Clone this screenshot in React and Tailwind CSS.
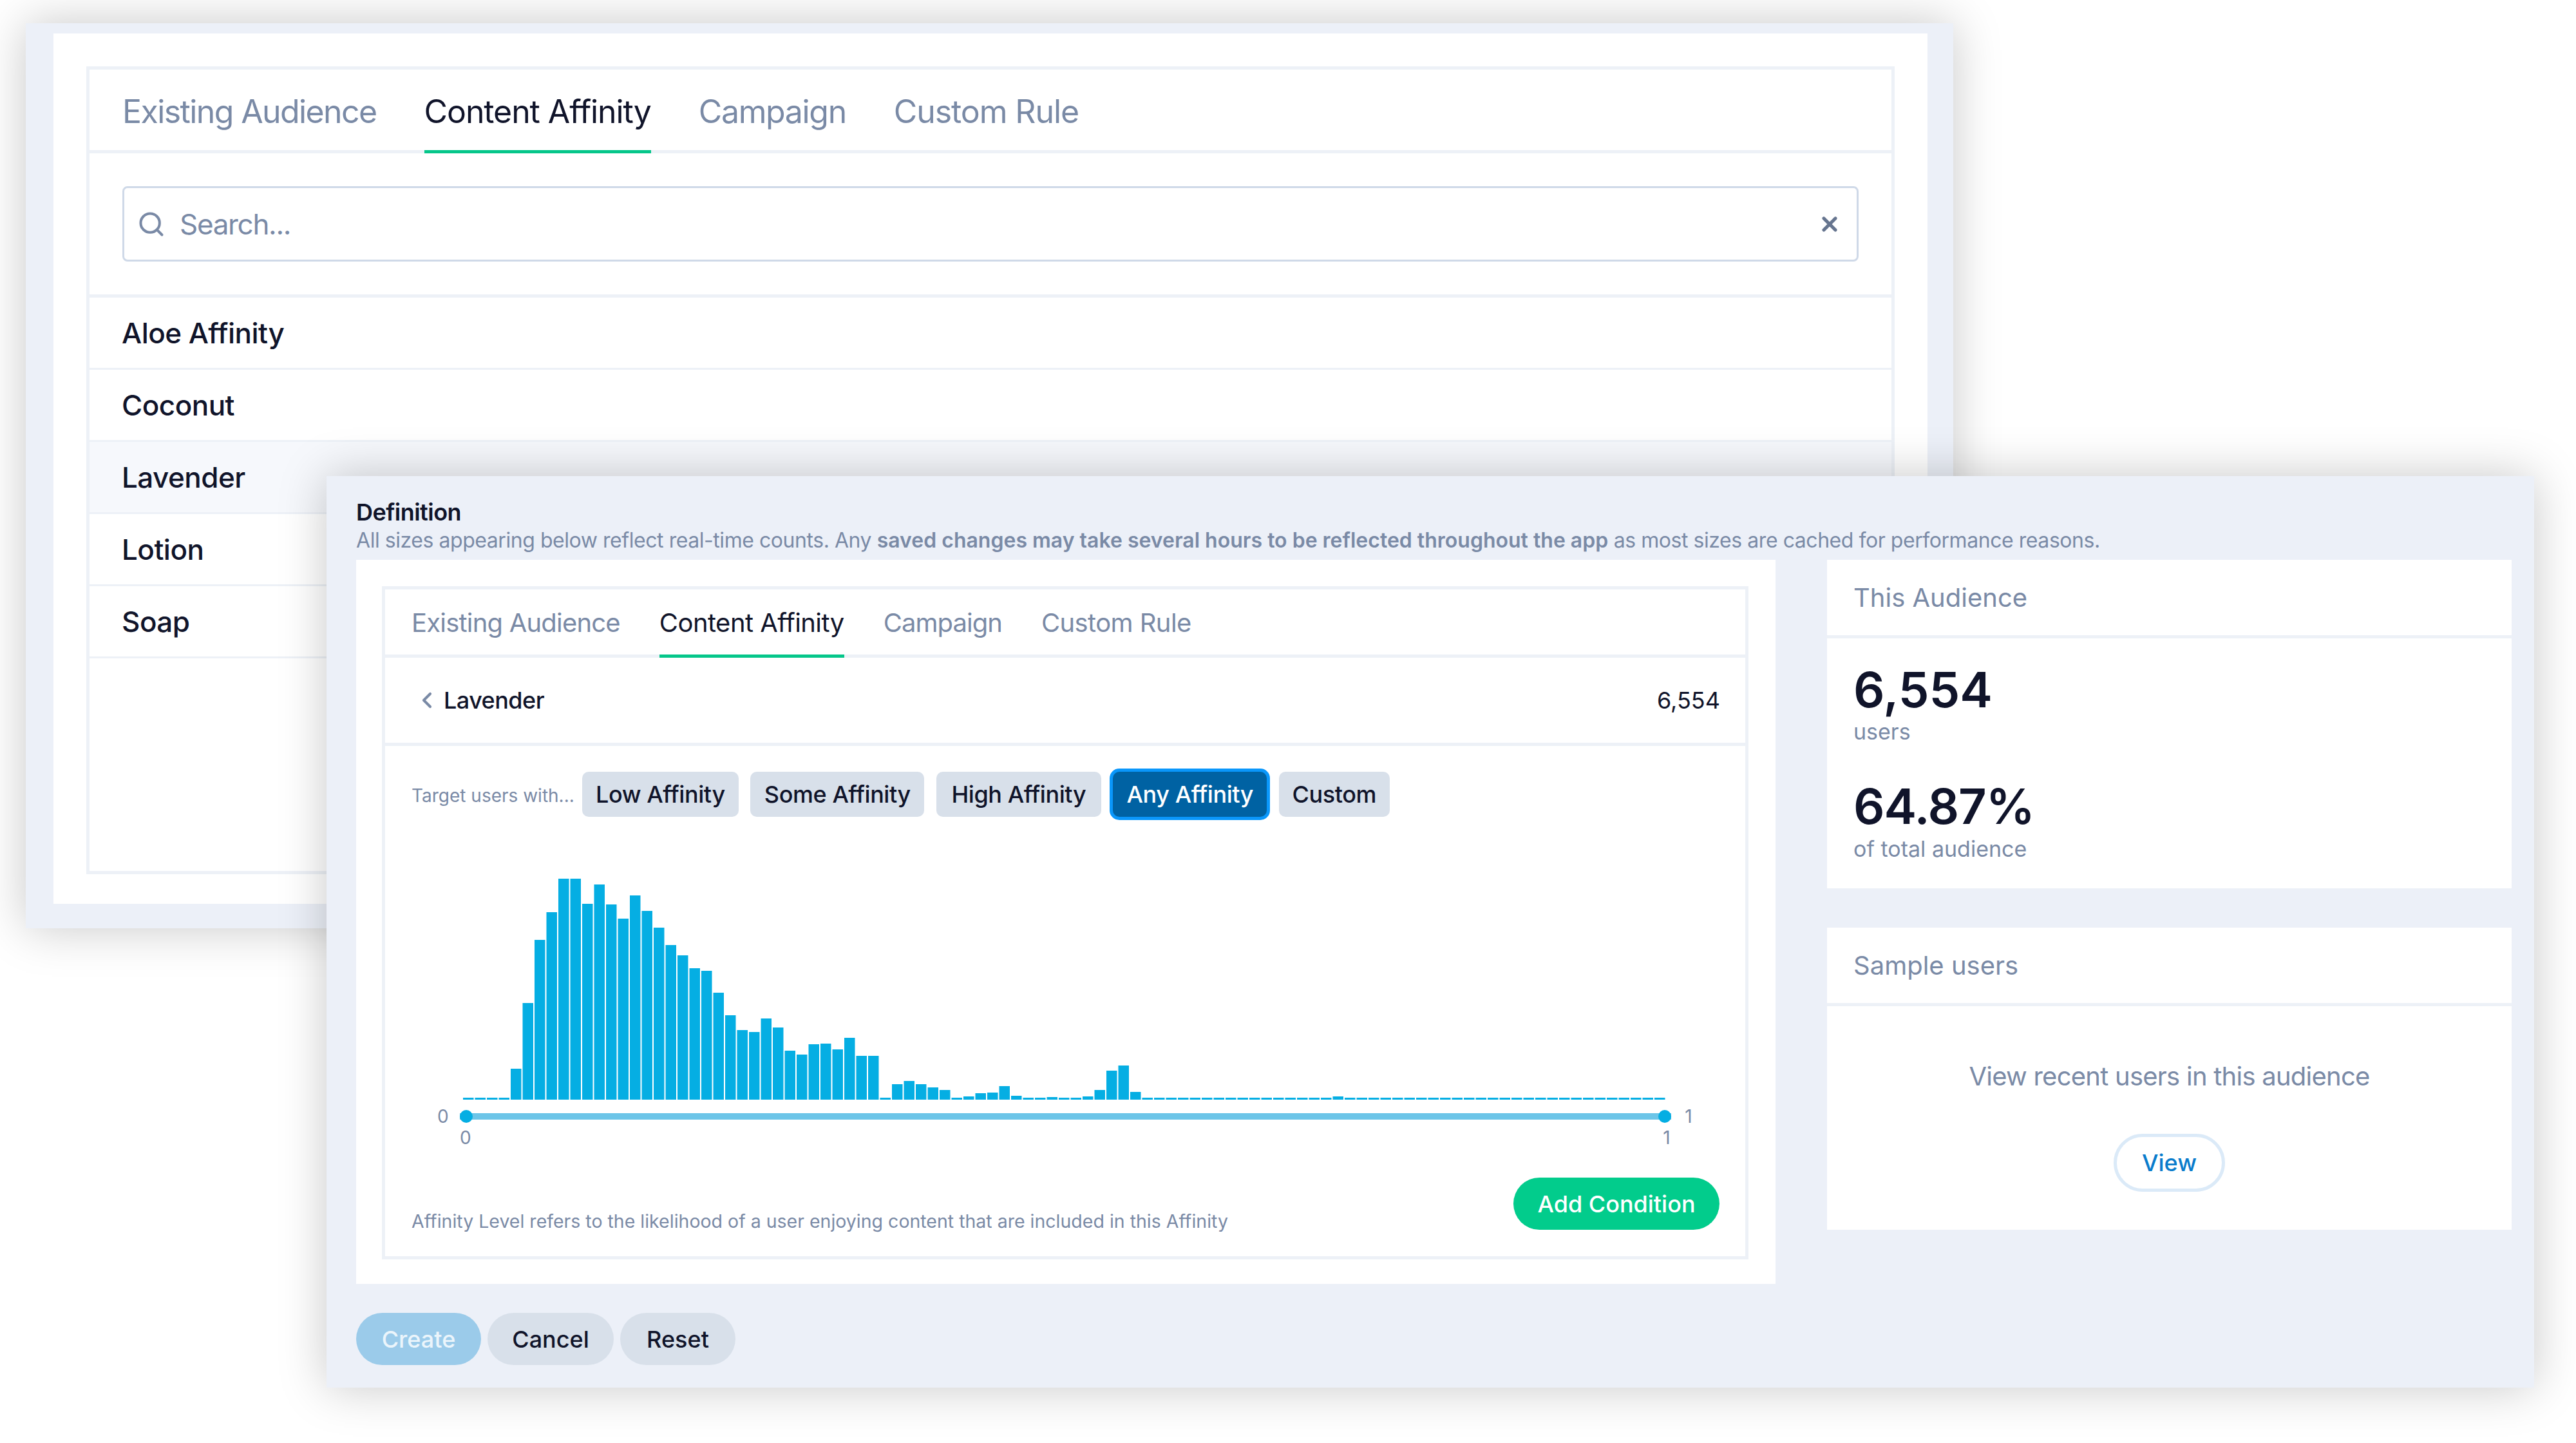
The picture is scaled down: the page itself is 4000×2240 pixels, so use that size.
import { Search, X, ChevronLeft } from 'lucide-react';

const backRows = ['Aloe Affinity', 'Coconut', 'Lavender', 'Lotion', 'Soap'];
const backTabs = [
  { label: 'Existing Audience', tracking: 'tracking-[-0.032em]' },
  { label: 'Content Affinity', tracking: 'tracking-[-0.022em]' },
  { label: 'Campaign', tracking: 'tracking-[-0.027em]' },
  { label: 'Custom Rule', tracking: 'tracking-[-0.022em]' },
];
const frontTabs = [
  { label: 'Existing Audience', tracking: 'tracking-[-0.02em]' },
  { label: 'Content Affinity', tracking: 'tracking-[-0.014em]' },
  { label: 'Campaign', tracking: 'tracking-[-0.024em]' },
  { label: 'Custom Rule', tracking: 'tracking-[-0.015em]' },
];
const affinityOptions = [
  { label: 'Low Affinity', width: 'w-[243px]' },
  { label: 'Some Affinity', width: 'w-[270px]' },
  { label: 'High Affinity', width: 'w-[256px]' },
  { label: 'Any Affinity', width: 'w-[239px]' },
  { label: 'Custom', width: 'w-[172px]' },
];

// bar heights read off the histogram, the tail stays at the thin baseline
const bars = [
  3, 3, 3, 3, 48, 150, 248, 291, 343, 343, 304, 334, 303, 281, 317, 293, 267, 240, 224, 204, 200,
  166, 131, 108, 105, 126, 112, 76, 70, 86, 87, 78, 96, 68, 68, 3, 24, 29, 24, 19, 15, 3, 5, 10, 11,
  21, 6, 3, 3, 4, 3, 3, 5, 15, 45, 53, 12,
  ...Array.from({ length: 44 }, (_, i) => (i === 16 ? 5 : 3)),
];

const Histogram = () => (
  <svg className="ml-[80px] mt-[96px] block" width="1870" height="343" viewBox="0 0 1870 343">
    {bars.map((h, i) => (
      <rect key={i} x={i * 18.5} y={343 - h} width="16.5" height={h} fill="#05aee3" />
    ))}
  </svg>
);

const Card = ({ title, children, className }) => (
  <div className={`flex flex-col bg-white ${className}`}>
    <div className="flex h-[122px] items-center border-b-[5px] border-[#edf1f7] pl-[41px] text-[40px] text-[#7a8aa6]">
      {title}
    </div>
    {children}
  </div>
);

const App = () => {
  return (
    <div className="relative h-[2240px] w-[4000px] overflow-hidden bg-white pl-[40px] pt-[36px] antialiased [font-family:Inter,sans-serif]">
      {/* Back window */}
      <div className="h-[1405px] w-[2993px] bg-[#ecf0f8] pb-[38px] pl-[43px] pr-[40px] pt-[16px] shadow-[0_0_70px_rgba(0,0,0,0.22)]">
        <div className="h-full bg-white px-[51px] pb-[46px] pt-[51px]">
          <div className="flex h-full flex-col border-[5px] border-[#edf1f7]">
            <div className="flex h-[130px] gap-[74px] border-b-[5px] border-[#edf1f7] pl-[51px]">
              {backTabs.map((tab) => (
                <div
                  key={tab.label}
                  className={`-mb-[5px] flex items-center border-b-[5px] pt-[5px] text-[50px] ${tab.tracking} ${
                    tab.label === 'Content Affinity'
                      ? 'border-[#05c68a] text-[#10142a]'
                      : 'border-transparent text-[#7a8aa6]'
                  }`}
                >
                  {tab.label}
                </div>
              ))}
            </div>
            <div className="border-b-[5px] border-[#edf1f7] p-[51px]">
              <div className="flex h-[117px] items-center rounded-[8px] border-[3px] border-[#cfd9e8] pl-[20px] pr-[24px]">
                <Search size={44} strokeWidth={2.2} color="#7a8aa6" />
                <span className="ml-[22px] flex-1 text-[44px] tracking-[-0.03em] text-[#7a8aa6]">Search...</span>
                <X size={36} strokeWidth={3.5} color="#66758f" />
              </div>
            </div>
            {backRows.map((row) => (
              <div
                key={row}
                className={`flex h-[112px] items-center border-b-[3px] border-[#edf1f7] pl-[50px] text-[44px] font-medium tracking-[-0.012em] text-[#10142a] ${
                  row === 'Lavender' ? 'bg-[#f6f8fc]' : ''
                }`}
              >
                {row}
              </div>
            ))}
          </div>
        </div>
      </div>

      {/* Front window */}
      <div className="absolute left-[507px] top-[739px] h-[1415px] w-[3428px] bg-[#ecf0f8] pl-[46px] pt-[34px] shadow-[0_0_70px_rgba(0,0,0,0.22)]">
        <div className="text-[36px] font-semibold leading-[44px] tracking-[-0.015em] text-[#10142a]">Definition</div>
        <p className="text-[32px] leading-[44px] tracking-[-0.014em] text-[#7a8aa6]">
          All sizes appearing below reflect real-time counts. Any{' '}
          <span className="font-semibold tracking-normal">
            saved changes may take several hours to be reflected throughout the app
          </span>{' '}
          as most sizes are cached for performance reasons.
        </p>

        <div className="mt-[8px] flex gap-[80px]">
          <div className="h-[1124px] w-[2204px] bg-white pl-[40px] pt-[41px]">
            <div className="flex h-[1045px] w-[2122px] flex-col border-[5px] border-[#edf1f7]">
              <div className="flex h-[106px] gap-[61px] border-b-[5px] border-[#edf1f7] pl-[41px]">
                {frontTabs.map((tab) => (
                  <div
                    key={tab.label}
                    className={`-mb-[5px] flex items-center border-b-[5px] pt-[3px] text-[40px] ${tab.tracking} ${
                      tab.label === 'Content Affinity'
                        ? 'border-[#05c68a] text-[#10142a]'
                        : 'border-transparent text-[#7a8aa6]'
                    }`}
                  >
                    {tab.label}
                  </div>
                ))}
              </div>

              <div className="flex h-[137px] items-center justify-between border-b-[5px] border-[#edf1f7] pl-[45px] pr-[39px] text-[36px]">
                <div className="flex items-center font-medium tracking-[-0.015em] text-[#10142a]">
                  <ChevronLeft size={40} strokeWidth={2.5} color="#7a8aa6" />
                  <span className="ml-[6px]">Lavender</span>
                </div>
                <span className="text-[#10142a]">6,554</span>
              </div>

              <div className="flex flex-1 flex-col pl-[41px] pr-[40px] pt-[40px]">
                <div className="flex h-[70px] items-center">
                  <span className="mr-[12px] mt-[4px] text-[28px] text-[#7a8aa6]">Target users with...</span>
                  <div className="flex gap-[18.5px]">
                    {affinityOptions.map((opt) => (
                      <div
                        key={opt.label}
                        className={`flex h-[70px] items-center justify-center rounded-[10px] text-[36px] font-medium tracking-[-0.012em] ${opt.width} ${
                          opt.label === 'Any Affinity'
                            ? 'bg-[#0062a3] text-white ring-[5px] ring-[#0a97fb]'
                            : 'bg-[#d8e0ea] text-[#10142a]'
                        }`}
                      >
                        {opt.label}
                      </div>
                    ))}
                  </div>
                </div>

                <Histogram />

                <div className="mt-[16px] flex h-[20px] items-center text-[28px] text-[#7a8aa6]">
                  <span className="ml-[40px] w-[16px] text-center">0</span>
                  <div className="relative ml-[19px] h-[10px] w-[1881px] bg-[#6cc5e8]">
                    <span className="absolute -top-[5px] left-0 h-[20px] w-[20px] rounded-full bg-[#05aee3]" />
                    <span className="absolute -top-[5px] right-0 h-[20px] w-[20px] rounded-full bg-[#05aee3]" />
                  </div>
                  <span className="ml-[19px] w-[16px] text-center">1</span>
                </div>
                <div className="mt-[6px] flex h-[34px] w-[1957px] items-center justify-between pl-[75px] text-[28px] text-[#7a8aa6]">
                  <span className="w-[16px] text-center">0</span>
                  <span className="w-[16px] text-center">1</span>
                </div>

                <div className="mt-[45px] flex items-end justify-between">
                  <span className="mb-[-2px] text-[28.5px] leading-[30px] text-[#7a8aa6]">
                    Affinity Level refers to the likelihood of a user enjoying content that are included in this Affinity
                  </span>
                  <button className="h-[81px] w-[320px] rounded-full bg-[#02cc8c] text-[36px] font-medium text-white">
                    Add Condition
                  </button>
                </div>
              </div>
            </div>
          </div>

          <div className="flex w-[1063px] flex-col gap-[61px]">
            <Card title="This Audience" className="h-[510px]">
              <div className="flex flex-1 flex-col pl-[41px]">
                <div className="mt-[34px] text-[76px] font-semibold leading-[90px] text-[#10142a]">6,554</div>
                <div className="text-[34px] leading-[42px] text-[#7a8aa6]">users</div>
                <div className="mt-[49px] text-[76px] font-semibold leading-[90px] tracking-[-0.015em] text-[#10142a]">
                  64.87%
                </div>
                <div className="mt-[1px] text-[34px] leading-[42px] text-[#7a8aa6]">of total audience</div>
              </div>
            </Card>
            <Card title="Sample users" className="h-[469px]">
              <div className="flex flex-1 flex-col items-center">
                <div className="mt-[84px] text-[40px] leading-[50px] tracking-[-0.019em] text-[#7a8aa6]">
                  View recent users in this audience
                </div>
                <button className="mt-[64px] h-[90px] w-[173px] rounded-full border-[5px] border-[#dbeaf8] text-[36px] font-medium text-[#0a7ccc]">
                  View
                </button>
              </div>
            </Card>
          </div>
        </div>

        <div className="mt-[45px] flex h-[81px] gap-[10px] text-[36px] font-medium">
          <button className="w-[194px] rounded-full bg-[#9bcbea] text-white/80">Create</button>
          <button className="w-[196px] rounded-full bg-[#d8e0ea] text-[#10142a]">Cancel</button>
          <button className="w-[179px] rounded-full bg-[#d8e0ea] text-[#10142a]">Reset</button>
        </div>
      </div>
    </div>
  );
};

export default App;
